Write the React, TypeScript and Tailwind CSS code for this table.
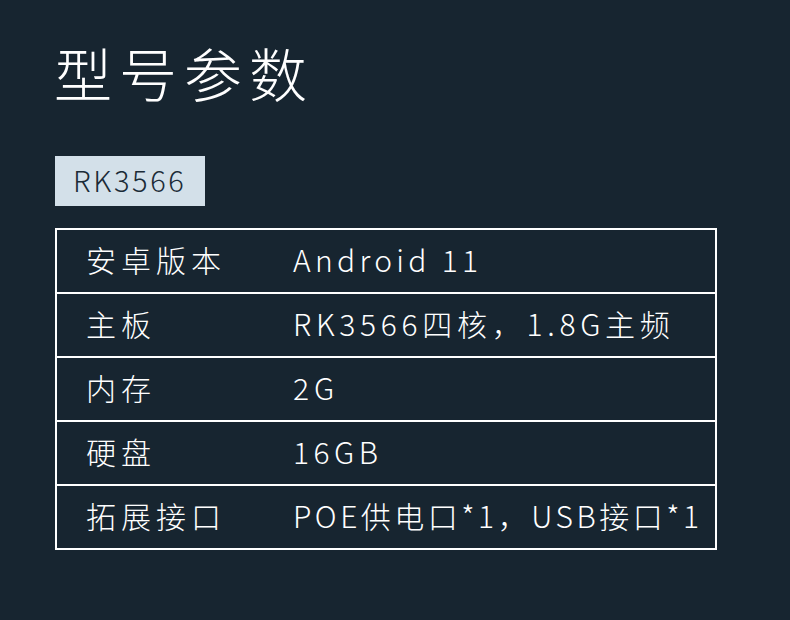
// 型号参数 规格表

const FONT = '"Noto Sans CJK SC", "Noto Sans", sans-serif';

const SPECS: { label: string; value: string; track: string }[] = [
  { label: '安卓版本', value: 'Android 11', track: 'tracking-[4.3px]' },
  { label: '主板', value: 'RK3566四核，1.8G主频', track: 'tracking-[4.7px]' },
  { label: '内存', value: '2G', track: 'tracking-[5px]' },
  { label: '硬盘', value: '16GB', track: 'tracking-[4.5px]' },
  { label: '拓展接口', value: 'POE供电口*1，USB接口*1', track: 'tracking-[3.5px]' },
];

export default function App() {
  return (
    <div
      className="w-[790px] h-[620px] bg-[#172530] text-white px-[55px] pt-[33px] overflow-hidden"
      style={{ fontFamily: FONT }}
    >
      <h1 className="text-[58px] leading-[78px] font-light tracking-[7px] -ml-[1px]">型号参数</h1>

      <div className="mt-[45px] inline-flex items-center h-[50px] w-[150px] pl-[18px] pb-[2px] bg-[#d3e0e9] text-[#1b2b37] text-[29px] tracking-[2.6px] font-light">
        RK3566
      </div>

      <table className="mt-[22px] w-[662px] border-collapse border-2 border-white">
        <tbody>
          {SPECS.map(s => (
            <tr key={s.label} className="h-[64px] border-2 border-white">
              <td className="w-[237px] pl-[29px] pb-[3px] text-[30px] tracking-[5px] font-light align-middle">
                {s.label}
              </td>
              <td className={`pb-[3px] text-[30px] font-light align-middle ${s.track}`}>{s.value}</td>
            </tr>
          ))}
        </tbody>
      </table>
    </div>
  );
}
